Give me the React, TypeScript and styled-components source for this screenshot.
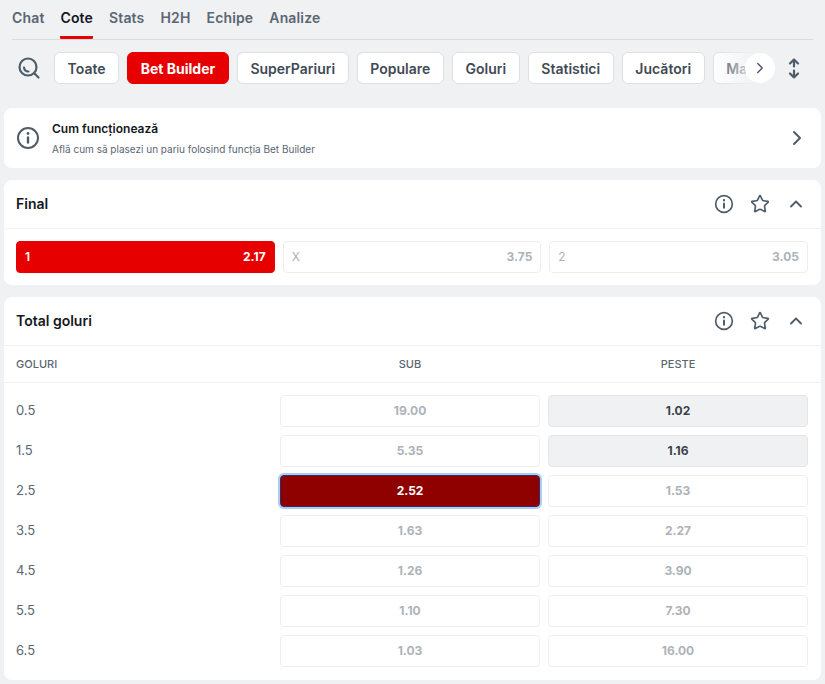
import React from 'react'
import styled, { createGlobalStyle } from 'styled-components'
import { ChevronRight, ChevronUp, Star } from 'lucide-react'

const GlobalStyle = createGlobalStyle`
    html, body {
        margin: 0;
        background: #eff1f3;
        font-family: Inter, "Liberation Sans", sans-serif;
    }
    * {
        box-sizing: border-box;
    }
`

const Page = styled.div`
    width: 825px;
    height: 684px;
    overflow: hidden;
    padding: 0 4px;
`

const Tabs = styled.div`
    display: flex;
    gap: 16px;
    height: 40px;
    margin: 0 8px;
    border-bottom: 1px solid #d9dce0;
`

const Tab = styled.div<{ $active?: boolean }>`
    height: 39px;
    padding-top: 9px;
    font-size: 14px;
    line-height: 18px;
    font-weight: 600;
    letter-spacing: 0.15px;
    color: ${({ $active }) => ($active ? '#14181d' : '#5a6672')};
    border-bottom: 3px solid ${({ $active }) => ($active ? '#e60000' : 'transparent')};
    border-radius: 0 0 1px 1px;
`

const FilterRow = styled.div`
    display: flex;
    align-items: center;
    height: 32px;
    margin-top: 12px;
    margin-bottom: 24px;
`

const SearchButton = styled.div`
    display: flex;
    align-items: center;
    justify-content: center;
    width: 50px;
    flex-shrink: 0;
    color: #4f5d6b;
`

const ChipViewport = styled.div`
    position: relative;
    width: 721px;
    flex-shrink: 0;
`

const ChipStrip = styled.div`
    display: flex;
    gap: 8px;
    overflow: hidden;
`

const Chip = styled.div<{ $active?: boolean }>`
    flex-shrink: 0;
    height: 32px;
    padding: 0 12.6px;
    display: flex;
    align-items: center;
    font-size: 14px;
    font-weight: ${({ $active }) => ($active ? 700 : 600)};
    color: ${({ $active }) => ($active ? '#ffffff' : '#3f4a55')};
    background: ${({ $active }) => ($active ? '#e60000' : '#ffffff')};
    border: 1px solid ${({ $active }) => ($active ? '#e60000' : '#dcdfe3')};
    border-radius: 6px;
`

const ChipFade = styled.div`
    position: absolute;
    top: 0;
    right: 0;
    width: 62px;
    height: 32px;
    background: linear-gradient(to right, rgba(239, 241, 243, 0), #eff1f3 70%);
`

const ScrollButton = styled.div`
    position: absolute;
    top: 1px;
    right: 0;
    width: 30px;
    height: 30px;
    border-radius: 50%;
    background: #ffffff;
    color: #4f5d6b;
    display: flex;
    align-items: center;
    justify-content: center;
`

const ExpandButton = styled.div`
    display: flex;
    justify-content: center;
    width: 38px;
    color: #4f5d6b;
`

const Card = styled.section`
    background: #ffffff;
    border-radius: 8px;
    margin-bottom: 12px;
`

const HowItWorks = styled(Card)`
    display: flex;
    align-items: center;
    height: 60px;
    padding: 0 12px;
    color: #4f5d6b;
`

const HowText = styled.div`
    flex: 1;
    margin-left: 12px;
`

const HowTitle = styled.div`
    font-size: 12px;
    line-height: 16px;
    font-weight: 600;
    color: #14181d;
    margin-bottom: 5px;
`

const HowSubtitle = styled.div`
    font-size: 10px;
    line-height: 14px;
    color: #5a6672;
`

const CardHeader = styled.div`
    display: flex;
    align-items: center;
    height: 49px;
    padding: 0 15px 0 12px;
    border-bottom: 1px solid #eff1f3;
`

const CardTitle = styled.h2`
    flex: 1;
    margin: 0 0 2px;
    font-size: 14px;
    font-weight: 600;
    color: #14181d;
`

const HeaderIcons = styled.div`
    display: flex;
    align-items: center;
    gap: 16px;
    color: #4f5d6b;
`

const FinalRow = styled.div`
    display: grid;
    grid-template-columns: repeat(3, 1fr);
    gap: 8px;
    padding: 12px 13px 12px 12px;
`

const Outcome = styled.div<{ $active?: boolean }>`
    display: flex;
    align-items: center;
    justify-content: space-between;
    height: 32px;
    padding: 0 8px 1px;
    font-size: 12px;
    border-radius: 4px;
    border: 1px solid ${({ $active }) => ($active ? '#e60000' : '#eceef0')};
    background: ${({ $active }) => ($active ? '#e60000' : '#ffffff')};
    color: ${({ $active }) => ($active ? '#ffffff' : '#adb3b9')};
    font-weight: ${({ $active }) => ($active ? 600 : 400)};
`

const OutcomeOdd = styled.span`
    font-weight: 700;
`

const OddsGrid = styled.div`
    display: grid;
    grid-template-columns: 256px 260px 260px;
    column-gap: 8px;
    padding: 0 13px 0 12px;
`

const ColumnLabels = styled(OddsGrid)`
    height: 37px;
    align-items: center;
    border-bottom: 1px solid #eff1f3;
    font-size: 11px;
    font-weight: 500;
    color: #5a6672;
`

const ColumnLabel = styled.div<{ $center?: boolean }>`
    text-align: ${({ $center }) => ($center ? 'center' : 'left')};
`

const OddsRows = styled(OddsGrid)`
    row-gap: 8px;
    padding-top: 12px;
    padding-bottom: 13px;
    align-items: center;
`

const LineLabel = styled.div`
    font-size: 13px;
    color: #5a6672;
    padding-bottom: 2px;
`

type OddState = 'idle' | 'selected' | 'available'

const OddButton = styled.div<{ $state: OddState }>`
    height: 32px;
    padding-bottom: 2px;
    display: flex;
    align-items: center;
    justify-content: center;
    font-size: 12px;
    font-weight: 700;
    border-radius: 4px;
    border: 1px solid
        ${({ $state }) => ($state === 'selected' ? '#3b2a5c' : $state === 'available' ? '#e3e5e8' : '#eceef0')};
    background: ${({ $state }) =>
        $state === 'selected' ? '#8f0000' : $state === 'available' ? '#eff1f3' : '#ffffff'};
    color: ${({ $state }) => ($state === 'selected' ? '#ffffff' : $state === 'available' ? '#3a4149' : '#adb3b9')};
    box-shadow: ${({ $state }) => ($state === 'selected' ? '0 0 0 2px #a9cdf3' : 'none')};
`

const chips = ['Toate', 'Bet Builder', 'SuperPariuri', 'Populare', 'Goluri', 'Statistici', 'Jucători', 'Marcatori']

const tabs = ['Chat', 'Cote', 'Stats', 'H2H', 'Echipe', 'Analize']

const lines: { line: string; under: string; over: string; overState?: OddState; underState?: OddState }[] = [
    { line: '0.5', under: '19.00', over: '1.02', overState: 'available' },
    { line: '1.5', under: '5.35', over: '1.16', overState: 'available' },
    { line: '2.5', under: '2.52', over: '1.53', underState: 'selected' },
    { line: '3.5', under: '1.63', over: '2.27' },
    { line: '4.5', under: '1.26', over: '3.90' },
    { line: '5.5', under: '1.10', over: '7.30' },
    { line: '6.5', under: '1.03', over: '16.00' }
]

function SearchIcon() {
    return (
        <svg width="24" height="24" viewBox="0 0 24 24" fill="none" stroke="currentColor" strokeWidth="2.2" strokeLinecap="round">
            <circle cx="11" cy="11" r="8.5" />
            <path d="M7 11.5a4.5 4.5 0 0 0 4.5 4" />
            <path d="M17.5 17.5l4 4" />
        </svg>
    )
}

function ExpandIcon() {
    return (
        <svg width="12" height="21" viewBox="0 0 12 21" fill="none" stroke="currentColor" strokeWidth="2.2" strokeLinecap="round" strokeLinejoin="round">
            <path d="M6 1.5v7M2 5.5l4-4 4 4" />
            <path d="M6 12.5v7M2 15.5l4 4 4-4" />
        </svg>
    )
}

function InfoIcon({ size }: { size: number }) {
    return (
        <svg width={size} height={size} viewBox="0 0 24 24" fill="none" stroke="currentColor" strokeWidth="2" strokeLinecap="round">
            <circle cx="12" cy="12" r="10" />
            <path d="M12 11.5v5" strokeWidth="2.4" />
            <path d="M12 7.5h.01" strokeWidth="2.8" />
        </svg>
    )
}

function MarketIcons() {
    return (
        <HeaderIcons>
            <InfoIcon size={20} />
            <Star size={20} strokeWidth={2} />
            <ChevronUp size={20} strokeWidth={2.2} />
        </HeaderIcons>
    )
}

export default function App() {
    return (
        <Page>
            <GlobalStyle />
            <Tabs>
                {tabs.map((tab) => (
                    <Tab key={tab} $active={tab === 'Cote'}>
                        {tab}
                    </Tab>
                ))}
            </Tabs>
            <FilterRow>
                <SearchButton>
                    <SearchIcon />
                </SearchButton>
                <ChipViewport>
                    <ChipStrip>
                        {chips.map((chip) => (
                            <Chip key={chip} $active={chip === 'Bet Builder'}>
                                {chip}
                            </Chip>
                        ))}
                    </ChipStrip>
                    <ChipFade />
                    <ScrollButton>
                        <ChevronRight size={18} strokeWidth={2} />
                    </ScrollButton>
                </ChipViewport>
                <ExpandButton>
                    <ExpandIcon />
                </ExpandButton>
            </FilterRow>
            <HowItWorks>
                <InfoIcon size={24} />
                <HowText>
                    <HowTitle>Cum funcționează</HowTitle>
                    <HowSubtitle>Află cum să plasezi un pariu folosind funcția Bet Builder</HowSubtitle>
                </HowText>
                <ChevronRight size={24} strokeWidth={2} />
            </HowItWorks>
            <Card>
                <CardHeader>
                    <CardTitle>Final</CardTitle>
                    <MarketIcons />
                </CardHeader>
                <FinalRow>
                    <Outcome $active>
                        <span>1</span>
                        <OutcomeOdd>2.17</OutcomeOdd>
                    </Outcome>
                    <Outcome>
                        <span>X</span>
                        <OutcomeOdd>3.75</OutcomeOdd>
                    </Outcome>
                    <Outcome>
                        <span>2</span>
                        <OutcomeOdd>3.05</OutcomeOdd>
                    </Outcome>
                </FinalRow>
            </Card>
            <Card>
                <CardHeader>
                    <CardTitle>Total goluri</CardTitle>
                    <MarketIcons />
                </CardHeader>
                <ColumnLabels>
                    <ColumnLabel>GOLURI</ColumnLabel>
                    <ColumnLabel $center>SUB</ColumnLabel>
                    <ColumnLabel $center>PESTE</ColumnLabel>
                </ColumnLabels>
                <OddsRows>
                    {lines.map((row) => (
                        <React.Fragment key={row.line}>
                            <LineLabel>{row.line}</LineLabel>
                            <OddButton $state={row.underState ?? 'idle'}>{row.under}</OddButton>
                            <OddButton $state={row.overState ?? 'idle'}>{row.over}</OddButton>
                        </React.Fragment>
                    ))}
                </OddsRows>
            </Card>
        </Page>
    )
}
